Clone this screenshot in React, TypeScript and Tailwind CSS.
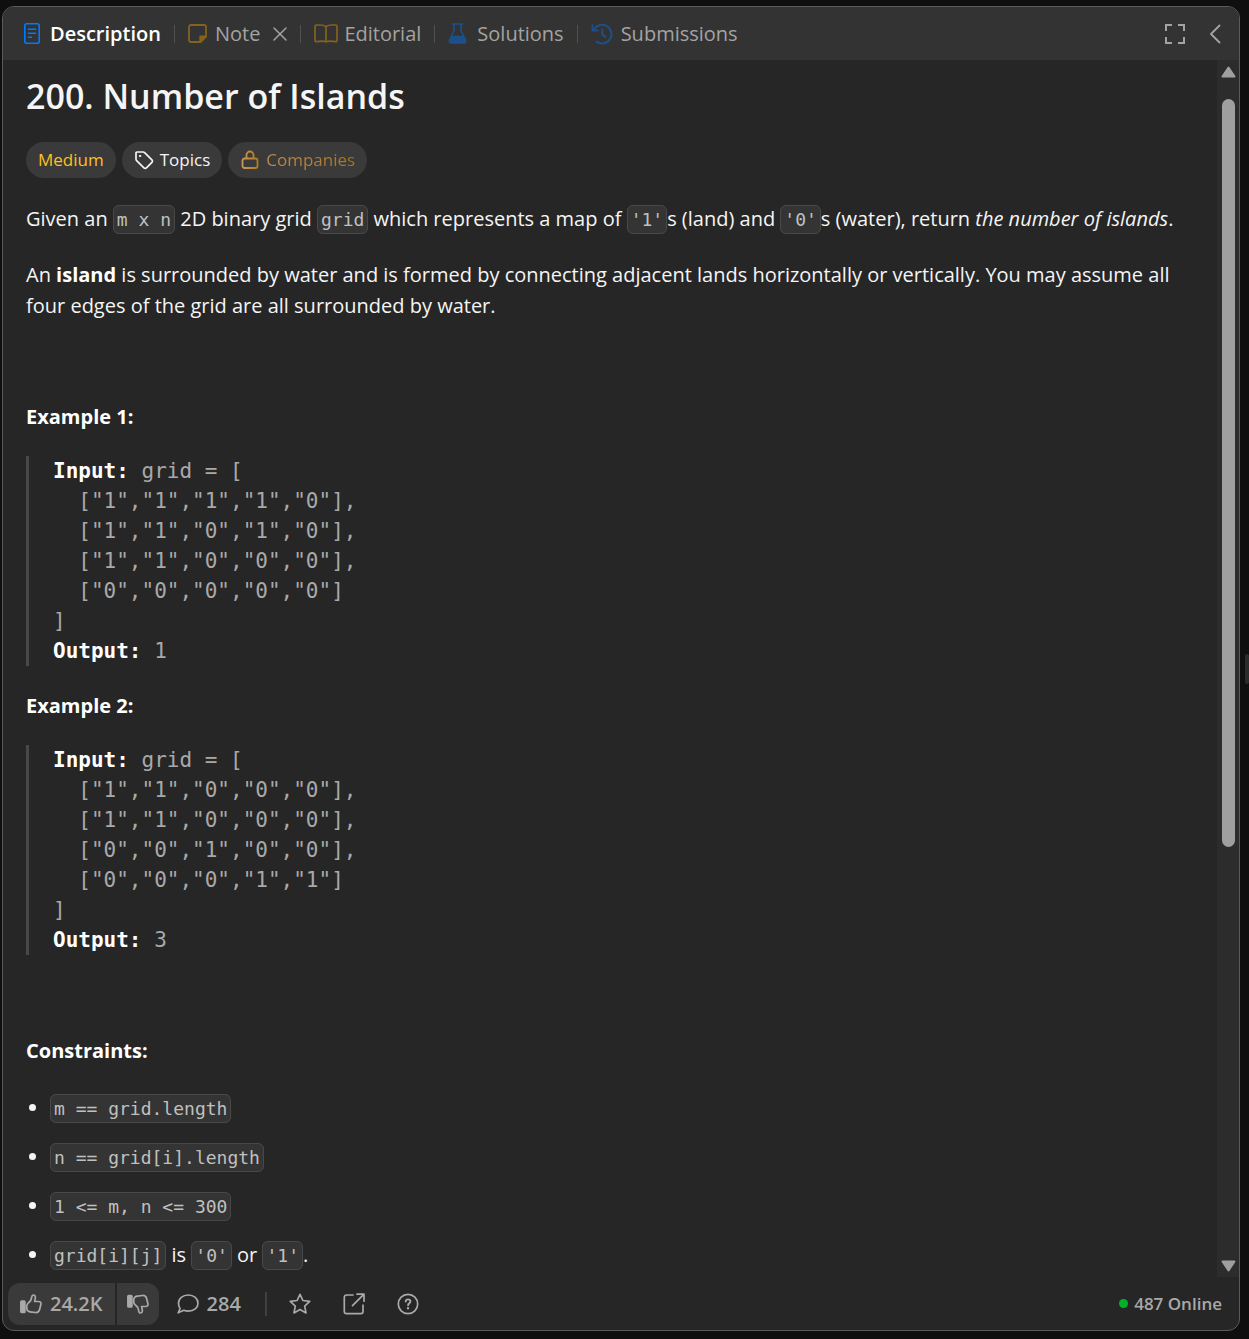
import React from "react";

type IconProps = { className?: string };

const Svg = ({ className, box = 24, children }: IconProps & { box?: number; children: React.ReactNode }) => (
  <svg
    aria-hidden="true"
    viewBox={`0 0 ${box} ${box}`}
    className={className}
    fill="none"
    stroke="currentColor"
    strokeWidth={2}
    strokeLinecap="round"
    strokeLinejoin="round"
  >
    {children}
  </svg>
);

const DocIcon = () => (
  <svg aria-hidden="true" viewBox="0 0 16 21" className="h-[21px] w-4 shrink-0 text-[#007bff]" fill="none" stroke="currentColor" strokeWidth={1.6} strokeLinecap="round">
    <rect x="0.8" y="0.8" width="14.4" height="19.4" rx="2" />
    <path d="M4.5 6.2h7M4.5 10.2h7M4.5 14.2h3" />
  </svg>
);

const NoteIcon = () => (
  <svg aria-hidden="true" viewBox="0 0 19 19" className="size-[19px] shrink-0 text-[#84631c]" fill="none" stroke="currentColor" strokeWidth={1.8} strokeLinejoin="round">
    <path d="M3 1h13a2 2 0 0 1 2 2v9.5L12.5 18H3a2 2 0 0 1-2-2V3a2 2 0 0 1 2-2Z" />
    <path d="M12.2 18v-5.6H18Z" fill="currentColor" />
  </svg>
);

const BookIcon = () => (
  <svg aria-hidden="true" viewBox="0 0 24 19" className="h-[19px] w-6 shrink-0 text-[#84631c]" fill="none" stroke="currentColor" strokeWidth={1.7} strokeLinejoin="round">
    <path d="M12 2.6C10 1 7.5 1 6 1H2.5A1.5 1.5 0 0 0 1 2.5v13.8c0 1 .6 1.5 1.5 1.4C6 17 9.5 16.8 12 17.8c2.5-1 6-.8 9.5-.1.9.1 1.5-.4 1.5-1.4V2.5A1.5 1.5 0 0 0 21.5 1H18c-1.5 0-4 0-6 1.6Z" />
    <path d="M12 2.6v15" />
  </svg>
);

const FlaskIcon = () => (
  <svg aria-hidden="true" viewBox="0 0 19 21" className="h-[21px] w-[19px] shrink-0 text-[#1d4f88]" fill="none" stroke="currentColor" strokeWidth={1.6} strokeLinecap="round" strokeLinejoin="round">
    <path d="M4.5 1h10M6 1v6.5L1.5 17c-.7 1.6.2 3 1.700 3h12.600c1.500 0 2.400-1.400 1.700-3L13 7.500V1" />
    <path d="M4.3 13.5h10.4l2.500 4.500-1 1.800H2.800l-1-1.800Z" fill="currentColor" />
  </svg>
);

const HistoryIcon = () => (
  <svg aria-hidden="true" viewBox="0 0 22 22" className="size-[22px] shrink-0 text-[#1d4f88]" fill="none" stroke="currentColor" strokeWidth={2} strokeLinecap="round" strokeLinejoin="round">
    <path d="M2.8 7A9.300 9.300 0 1 1 5.500 18.600" />
    <path d="M1.500 2.300v5.200h5.200" />
    <path d="M11.300 6.500v5l3.200 2.600" />
  </svg>
);

const ThumbUp = ({ className }: IconProps) => (
  <svg aria-hidden="true" viewBox="0 0 22 20" className={className} fill="none" stroke="currentColor" strokeWidth={1.7} strokeLinejoin="round" strokeLinecap="round">
    <rect x="0.9" y="7" width="4" height="11.5" rx="0.8" fill="currentColor" />
    <path d="M8 9.300c2-1.200 3.200-3 3.600-5.600.3-2 .8-2.700 1.700-2.700 1.600 0 2.300 1.400 2 3.200l-.7 3.300h4c1.700 0 2.700 1.200 2.300 2.800l-1.300 5.200c-.6 2.300-2 3.200-4.200 3l-3.400-.4C9.500 17.900 7.400 17.300 7 15.500c-.4-2-.6-4.900 1-6.200Z" />
  </svg>
);

const Divider = () => <span className="h-[18px] w-px shrink-0 bg-[#505050]" />;

const Chip = ({ children }: { children: React.ReactNode }) => (
  <code className="rounded-md border border-[#484848] bg-[#343434] p-[3px] font-['DejaVu_Sans_Mono',monospace] text-lg leading-none text-[#c0c0c0]">
    {children}
  </code>
);

const Heading = ({ children }: { children: React.ReactNode }) => (
  <p className="mb-6">
    <strong className="font-bold text-white">{children}</strong>
  </p>
);

const Example = ({ rows, output }: { rows: string[]; output: string }) => (
  <pre className="mb-6 border-l-[3px] border-[#484848] pl-6 font-['DejaVu_Sans_Mono',monospace] text-[21px] leading-[30px] text-[#a9a9a9]">
    <strong className="text-white">Input:</strong>
    {" grid = [\n"}
    {rows.map((r, i) => `  [${r.split("").map((c) => `"${c}"`).join(",")}]${i < rows.length - 1 ? "," : ""}\n`).join("")}
    {"]\n"}
    <strong className="text-white">Output:</strong>
    {" " + output}
  </pre>
);

const Scrollbar = () => (
  <div className="flex w-[22px] shrink-0 flex-col items-center bg-[#2c2c2c]" aria-hidden="true">
    <svg viewBox="0 0 15 12" className="mt-1.5 h-3 w-[15px] shrink-0 text-[#9f9f9f]" fill="currentColor" stroke="currentColor" strokeWidth={2} strokeLinejoin="round">
      <path d="M7.500 1.500 13.500 10.500h-12Z" />
    </svg>
    <div className="mt-[21px] mb-[11px] flex min-h-0 flex-1 flex-col">
      <div className="h-[65%] w-[13px] rounded-full bg-[#9f9f9f]" />
    </div>
    <svg viewBox="0 0 15 12" className="mb-[5px] h-3 w-[15px] shrink-0 text-[#9f9f9f]" fill="currentColor" stroke="currentColor" strokeWidth={2} strokeLinejoin="round">
      <path d="M7.500 10.500 13.500 1.500h-12Z" />
    </svg>
  </div>
);

export default function App() {
  return (
    <div className="flex h-screen bg-[#0f0f0f] pt-1.5 pb-2 pl-0.5 font-['Open_Sans','Noto_Sans',sans-serif] text-xl text-[#f5f5f5]">
      <main className="flex min-w-0 flex-1 flex-col overflow-hidden rounded-xl border border-[#5a5a5a] bg-[#262626]">
        <header className="flex h-[53px] shrink-0 items-center bg-[#333333] pr-3.5 pl-[21px] text-[#a3a3a3]">
          <nav className="flex items-center gap-[13px]">
            <button className="flex items-center gap-2.5 font-semibold text-white">
              <DocIcon />
              Description
            </button>
            <Divider />
            <div className="flex items-center gap-[13px]">
              <button className="flex items-center gap-2">
                <NoteIcon />
                Note
              </button>
              <button aria-label="Close note">
                <Svg box={14} className="size-3.5">
                  <path d="M1 1l12 12M13 1 1 13" strokeWidth={1.5} />
                </Svg>
              </button>
            </div>
            <Divider />
            <button className="flex items-center gap-1.5">
              <BookIcon />
              Editorial
            </button>
            <Divider />
            <button className="flex items-center gap-2.5">
              <FlaskIcon />
              Solutions
            </button>
            <Divider />
            <button className="flex items-center gap-2">
              <HistoryIcon />
              Submissions
            </button>
          </nav>
          <div className="ml-auto flex items-center gap-5">
            <button aria-label="Full screen">
              <svg viewBox="0 0 20 20" className="size-5" fill="none" stroke="currentColor" strokeWidth={2}>
                <path d="M1 7V1h6M13 1h6v6M19 13v6h-6M7 19H1v-6" />
              </svg>
            </button>
            <button aria-label="Collapse">
              <Svg box={20} className="size-5">
                <path d="M14.500 1.500 6 10l8.500 8.500" strokeWidth={1.8} />
              </Svg>
            </button>
          </div>
        </header>

        <div className="flex min-h-0 flex-1">
          <article className="min-w-0 flex-1 overflow-hidden pr-8 pl-[23px] leading-[31px]">
            <h1 className="mt-3 mb-[22px] text-[34px] leading-12 font-semibold">200. Number of Islands</h1>
            <div className="mb-[25px] flex gap-1.5 text-[17px] leading-6">
              <span className="flex h-9 items-center rounded-full bg-[#3a3a3a] px-3 text-[#ffc01e]">Medium</span>
              <button className="flex h-9 items-center gap-1.5 rounded-full bg-[#3a3a3a] px-3">
                <Svg box={20} className="size-5">
                  <path d="M2 3v6.200c0 .5.200 1 .6 1.400l7.300 7.300c.7.700 1.800.7 2.500 0l5.500-5.500c.7-.7.7-1.800 0-2.500l-7.300-7.300C10.200 2.200 9.700 2 9.200 2H3a1 1 0 0 0-1 1Z" strokeWidth={1.7} />
                  <circle cx="6" cy="6" r="0.7" fill="currentColor" strokeWidth={1} />
                </Svg>
                Topics
              </button>
              <button className="flex h-9 items-center gap-1.5 rounded-full bg-[#3a3a3a] px-3">
                <svg aria-hidden="true" viewBox="0 0 20 20" className="size-5" fill="none" stroke="url(#gold)" strokeWidth={1.8} strokeLinejoin="round">
                  <defs>
                    <linearGradient id="gold" gradientUnits="userSpaceOnUse" x1="2" y1="10" x2="18" y2="10">
                      <stop offset="0" stopColor="#c9995a" />
                      <stop offset="1" stopColor="#b37a1c" />
                    </linearGradient>
                  </defs>
                  <rect x="2.500" y="8.500" width="15" height="9.500" rx="2" />
                  <path d="M6.500 8.500V5a3.500 3.500 0 0 1 7 0v3.500" />
                </svg>
                <span className="bg-linear-to-r from-[#bb8c50] to-[#a87318] bg-clip-text text-transparent">Companies</span>
              </button>
            </div>

            <p className="mb-[25px]">
              Given an <Chip>m x n</Chip> 2D binary grid <Chip>grid</Chip> which represents a map of <Chip>'1'</Chip>s (land) and <Chip>'0'</Chip>s (water), return <em>the number of islands</em>.
            </p>
            <p className="mb-6">
              An <strong className="font-bold text-white">island</strong> is surrounded by water and is formed by connecting adjacent lands horizontally or vertically. You may assume all four edges of the grid are all surrounded by water.
            </p>
            <p className="mb-6 h-8">&nbsp;</p>
            <Heading>Example 1:</Heading>
            <Example rows={["11110", "11010", "11000", "00000"]} output="1" />
            <Heading>Example 2:</Heading>
            <Example rows={["11000", "11000", "00100", "00011"]} output="3" />
            <p className="mb-6 h-8">&nbsp;</p>
            <Heading>Constraints:</Heading>
            <ul className="flex list-disc flex-col gap-[18px] pt-0.5 pl-6">
              <li><Chip>m == grid.length</Chip></li>
              <li><Chip>n == grid[i].length</Chip></li>
              <li><Chip>{"1 <= m, n <= 300"}</Chip></li>
              <li><Chip>grid[i][j]</Chip> is <Chip>'0'</Chip> or <Chip>'1'</Chip>.</li>
            </ul>
          </article>
          <Scrollbar />
        </div>

        <footer className="flex shrink-0 items-center pt-1.5 pr-[17px] pb-[5px] pl-[5px] text-[#a9a9a9]">
          <div className="flex gap-0.5 overflow-hidden rounded-xl font-semibold">
            <button className="flex h-[42px] items-center gap-2 bg-[#3a3a3a] px-3">
              <ThumbUp className="h-5 w-[22px]" />
              24.2K
            </button>
            <button aria-label="Dislike" className="flex h-[42px] items-center bg-[#3a3a3a] px-2.5">
              <ThumbUp className="h-5 w-[22px] -scale-y-100" />
            </button>
          </div>
          <button className="ml-[18px] flex items-center gap-2 font-semibold">
            <svg aria-hidden="true" viewBox="0 0 22 20" className="h-5 w-[22px]" fill="none" stroke="currentColor" strokeWidth={1.7} strokeLinejoin="round">
              <path d="M11.300 1C17 1 21 4.500 21 9.200s-4 8-9.700 8c-1.600 0-3.100-.3-4.500-.9L1.200 18.800l1.900-4.300C2 13 1.500 11.200 1.500 9.200 1.500 4.500 5.600 1 11.300 1Z" />
            </svg>
            284
          </button>
          <span className="mr-[22px] ml-6 h-6 w-0.5 bg-[#404040]" />
          <div className="flex items-center gap-8">
            <button aria-label="Favorite">
              <Svg box={22} className="size-[22px]">
                <path d="M11 1.300l2.900 6.200 6.800.9-5 4.700 1.300 6.800-6-3.300-6 3.300 1.300-6.800-5-4.700 6.800-.9Z" strokeWidth={1.7} />
              </Svg>
            </button>
            <button aria-label="Share">
              <Svg box={22} className="size-[22px]">
                <path d="M10 2H3.500A2.200 2.200 0 0 0 1.300 4.200v14.300c0 1.200 1 2.200 2.200 2.200h14.300c1.200 0 2.200-1 2.200-2.200V12M14 1.200h7v7M20.500 1.700 9.500 12.700" strokeWidth={1.7} />
              </Svg>
            </button>
            <button aria-label="Help">
              <Svg box={22} className="size-[22px]">
                <circle cx="11" cy="11" r="9.7" strokeWidth={1.7} />
                <path d="M8.700 8.500c.1-1.300 1-2.100 2.300-2.100s2.400.8 2.400 2.100c0 1.700-2.300 1.800-2.300 3.700" strokeWidth={1.9} />
                <circle cx="11" cy="15.2" r="0.6" fill="currentColor" strokeWidth={1.2} />
              </Svg>
            </button>
          </div>
          <div className="ml-auto flex items-center gap-1.5 text-[17px] font-semibold">
            <span className="size-[9px] rounded-full bg-[#02b128]" />
            487 Online
          </div>
        </footer>
      </main>
      <div className="flex w-[9px] shrink-0 items-center justify-end">
        <div className="h-[30px] w-1 rounded-full bg-[#2b2b2b]" />
      </div>
    </div>
  );
}
